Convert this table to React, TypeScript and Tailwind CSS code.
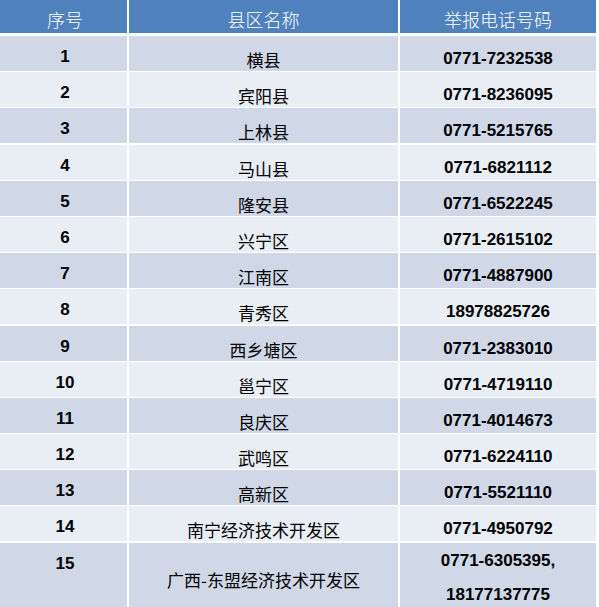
import React from "react";

const rows: [string, string, string][] = [
  ["1", "横县", "0771-7232538"],
  ["2", "宾阳县", "0771-8236095"],
  ["3", "上林县", "0771-5215765"],
  ["4", "马山县", "0771-6821112"],
  ["5", "隆安县", "0771-6522245"],
  ["6", "兴宁区", "0771-2615102"],
  ["7", "江南区", "0771-4887900"],
  ["8", "青秀区", "18978825726"],
  ["9", "西乡塘区", "0771-2383010"],
  ["10", "邕宁区", "0771-4719110"],
  ["11", "良庆区", "0771-4014673"],
  ["12", "武鸣区", "0771-6224110"],
  ["13", "高新区", "0771-5521110"],
  ["14", "南宁经济技术开发区", "0771-4950792"],
];

const num = "font-['Liberation_Sans',Arial,sans-serif] font-bold text-[17px] leading-[17px] text-black";
const cjk = "font-['Noto_Sans_CJK_SC',sans-serif] text-[17px] leading-[17px] text-black";

export default function App() {
  return (
    <div className="w-[599px] h-[607px] bg-white overflow-hidden">
      <div className="w-[596px] flex flex-col">
        <div className="grid grid-cols-[127px_269px_196px] gap-x-[2px] h-[33px] mb-[3px]">
          {["序号", "县区名称", "举报电话号码"].map((h, i) => (
            <div
              key={h}
              className={`bg-[#4f81bd] flex justify-center pt-[10px] font-['Noto_Sans_CJK_SC',sans-serif] font-light text-[18px] leading-[18px] text-white ${i === 0 ? "pl-[3px]" : ""}`}
            >
              {h}
            </div>
          ))}
        </div>
        <div className="flex flex-col gap-y-[1.2px]">
          {rows.map(([n, name, phone], i) => {
            const bg = i % 2 === 0 ? "bg-[#d0d8e8]" : "bg-[#e9edf4]";
            return (
              <div key={n} className="grid grid-cols-[127px_269px_196px] gap-x-[2px] h-[35px]">
                <div className={`${bg} flex justify-center pl-[3px] pt-[12px] ${num}`}>{n}</div>
                <div className={`${bg} flex justify-center pt-[15px] ${cjk}`}>{name}</div>
                <div className={`${bg} flex justify-center pt-[14px] ${num}`}>{phone}</div>
              </div>
            );
          })}
          <div className="grid grid-cols-[127px_269px_196px] gap-x-[2px] h-[62px]">
            <div className={`bg-[#d0d8e8] flex justify-center pl-[3px] pt-[12px] ${num}`}>15</div>
            <div className={`bg-[#d0d8e8] flex justify-center pt-[28px] ${cjk}`}>广西-东盟经济技术开发区</div>
            <div className={`bg-[#d0d8e8] flex flex-col items-center pt-[1px] font-['Liberation_Sans',Arial,sans-serif] font-bold text-[17px] leading-[34px] text-black`}>
              <span>0771-6305395,</span>
              <span>18177137775</span>
            </div>
          </div>
        </div>
      </div>
    </div>
  );
}
